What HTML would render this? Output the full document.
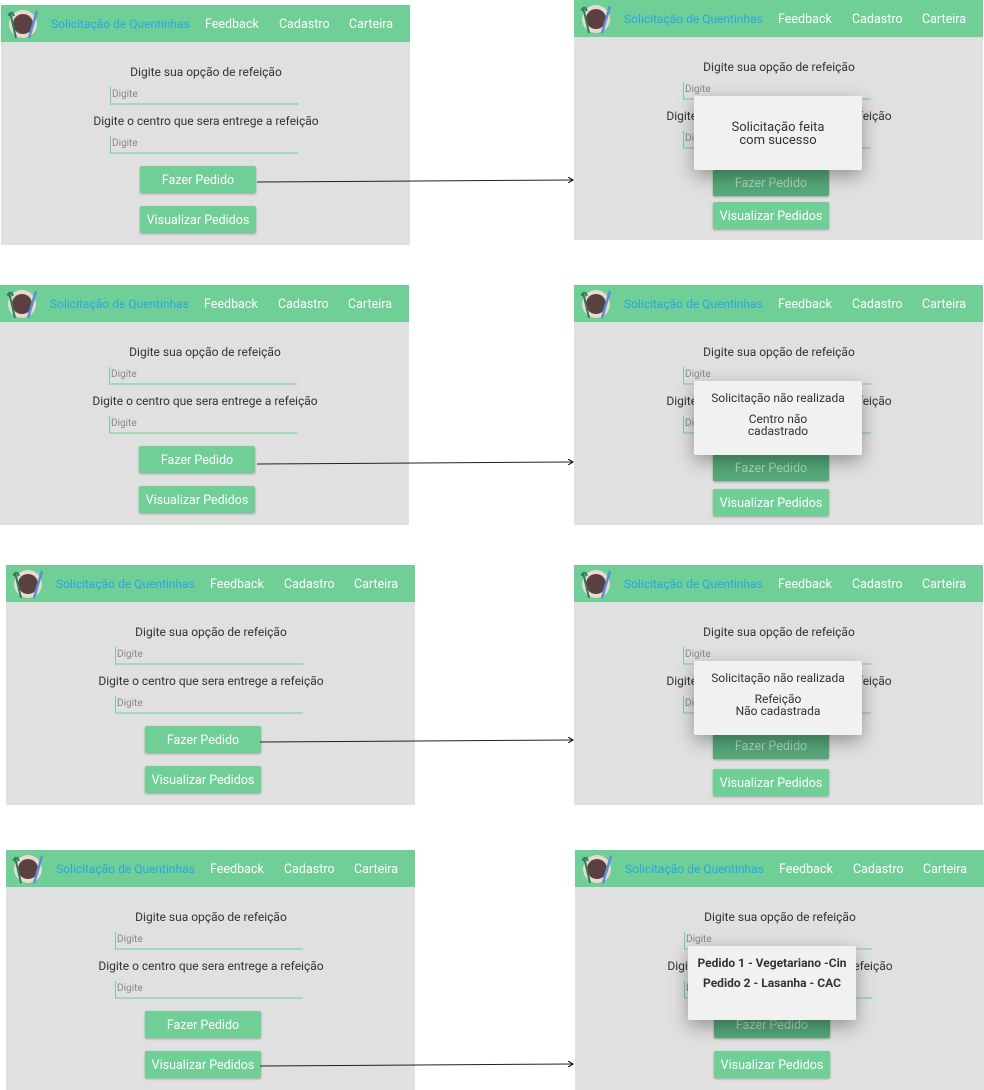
<!DOCTYPE html>
<html><head><meta charset="utf-8"><style>
body{margin:0;width:984px;height:1090px;background:#fff;position:relative;overflow:hidden;font-family:"Roboto","Liberation Sans",sans-serif}
.p{position:absolute;width:409px;height:240px;background:#e0e0e0}
.nav{position:absolute;left:0;top:0;width:100%;height:37px;background:#6fcf97;color:#fff;font-size:12.5px}
.nav span{position:absolute;top:12px}
.nav .t{font-size:12px}
.logo{position:absolute;left:6px;top:3px;width:32px;height:32px}
.t{color:#2aa6e8}
.lab{position:absolute;left:0;width:410px;text-align:center;font-size:12px;color:#333}
.in{position:absolute;left:109px;width:188px;height:18px;border-bottom:2px solid #a5d8b6;font-size:10px;color:#888;border-left:1px solid #6fcfb0;padding-left:1px;box-sizing:border-box;line-height:16px}
.b{position:absolute;left:139px;width:116px;height:27px;background:#6fcf97;color:#fff;font-size:12.5px;text-align:center;line-height:29px;border-radius:2px;box-shadow:0 1px 2px rgba(0,0,0,.3)}
.dk{background:#56a97a;color:#a8d8b8}
.dlg{position:absolute;top:96px;width:168px;height:74px;background:#f1f1f1;border-radius:2px;box-shadow:0 6px 18px rgba(0,0,0,.35);text-align:center;font-size:12px;color:#333}
</style></head><body>

<svg width="984" height="1090" style="position:absolute;left:0;top:0;z-index:5" >
<defs><marker id="a" markerWidth="6" markerHeight="6" refX="5" refY="3" orient="auto"><path d="M0,0L5,3L0,6" fill="none" stroke="#000" stroke-width="1"/></marker></defs>
<line x1="257" y1="182" x2="573" y2="180" stroke="#222" marker-end="url(#a)"/>
<line x1="257" y1="464" x2="573" y2="462" stroke="#222" marker-end="url(#a)"/>
<line x1="260" y1="742" x2="573" y2="740" stroke="#222" marker-end="url(#a)"/>
<line x1="260" y1="1066" x2="573" y2="1064" stroke="#222" marker-end="url(#a)"/>
</svg>

<div class="p" style="left:1px;top:5px">
<div class="nav"><svg class="logo" viewBox="0 0 32 32"><circle cx="16" cy="16" r="14" fill="#e9d9cf"/><circle cx="16" cy="16" r="10" fill="#5a4040"/><path d="M3 4l6 26M1 6l4 3M5 4l2 4" stroke="#2e7d5a" stroke-width="2"/><path d="M30 3L22 30" stroke="#5b8fd6" stroke-width="2.5"/></svg><span class="t" style="left:50px">Solicitação de Quentinhas</span><span style="left:204px">Feedback</span><span style="left:278px">Cadastro</span><span style="left:348px">Carteira</span></div>
<div class="lab" style="top:60px">Digite sua opção de refeição</div>
<div class="in" style="top:82px">Digite</div>
<div class="lab" style="top:109px">Digite o centro que sera entrege a refeição</div>
<div class="in" style="top:131px">Digite</div>
<div class="b" style="top:161px">Fazer Pedido</div>
<div class="b" style="top:201px">Visualizar Pedidos</div>
</div>

<div class="p" style="left:574px;top:0">
<div class="nav"><svg class="logo" viewBox="0 0 32 32"><circle cx="16" cy="16" r="14" fill="#e9d9cf"/><circle cx="16" cy="16" r="10" fill="#5a4040"/><path d="M3 4l6 26M1 6l4 3M5 4l2 4" stroke="#2e7d5a" stroke-width="2"/><path d="M30 3L22 30" stroke="#5b8fd6" stroke-width="2.5"/></svg><span class="t" style="left:50px">Solicitação de Quentinhas</span><span style="left:204px">Feedback</span><span style="left:278px">Cadastro</span><span style="left:348px">Carteira</span></div>
<div class="lab" style="top:60px">Digite sua opção de refeição</div>
<div class="in" style="top:82px">Digite</div>
<div class="lab" style="top:109px">Digite o centro que sera entrege a refeição</div>
<div class="in" style="top:131px">Digite</div>
<div class="b dk" style="top:169px">Fazer Pedido</div>
<div class="b" style="top:202px">Visualizar Pedidos</div>
<div class="dlg" style="left:120px;font-size:13px;line-height:13px"><div style="padding-top:25px">Solicitação feita<br>com sucesso</div></div>
</div>

<div class="p" style="left:0;top:285px">
<div class="nav"><svg class="logo" viewBox="0 0 32 32"><circle cx="16" cy="16" r="14" fill="#e9d9cf"/><circle cx="16" cy="16" r="10" fill="#5a4040"/><path d="M3 4l6 26M1 6l4 3M5 4l2 4" stroke="#2e7d5a" stroke-width="2"/><path d="M30 3L22 30" stroke="#5b8fd6" stroke-width="2.5"/></svg><span class="t" style="left:50px">Solicitação de Quentinhas</span><span style="left:204px">Feedback</span><span style="left:278px">Cadastro</span><span style="left:348px">Carteira</span></div>
<div class="lab" style="top:60px">Digite sua opção de refeição</div>
<div class="in" style="top:82px">Digite</div>
<div class="lab" style="top:109px">Digite o centro que sera entrege a refeição</div>
<div class="in" style="top:131px">Digite</div>
<div class="b" style="top:161px">Fazer Pedido</div>
<div class="b" style="top:201px">Visualizar Pedidos</div>
</div>

<div class="p" style="left:574px;top:285px">
<div class="nav"><svg class="logo" viewBox="0 0 32 32"><circle cx="16" cy="16" r="14" fill="#e9d9cf"/><circle cx="16" cy="16" r="10" fill="#5a4040"/><path d="M3 4l6 26M1 6l4 3M5 4l2 4" stroke="#2e7d5a" stroke-width="2"/><path d="M30 3L22 30" stroke="#5b8fd6" stroke-width="2.5"/></svg><span class="t" style="left:50px">Solicitação de Quentinhas</span><span style="left:204px">Feedback</span><span style="left:278px">Cadastro</span><span style="left:348px">Carteira</span></div>
<div class="lab" style="top:60px">Digite sua opção de refeição</div>
<div class="in" style="top:82px">Digite</div>
<div class="lab" style="top:109px">Digite o centro que sera entrege a refeição</div>
<div class="in" style="top:131px">Digite</div>
<div class="b dk" style="top:169px">Fazer Pedido</div>
<div class="b" style="top:204px">Visualizar Pedidos</div>
<div class="dlg" style="left:120px;line-height:12px"><div style="padding-top:11px">Solicitação não realizada</div><div style="padding-top:9px">Centro não<br>cadastrado</div></div>
</div>

<div class="p" style="left:6px;top:565px">
<div class="nav"><svg class="logo" viewBox="0 0 32 32"><circle cx="16" cy="16" r="14" fill="#e9d9cf"/><circle cx="16" cy="16" r="10" fill="#5a4040"/><path d="M3 4l6 26M1 6l4 3M5 4l2 4" stroke="#2e7d5a" stroke-width="2"/><path d="M30 3L22 30" stroke="#5b8fd6" stroke-width="2.5"/></svg><span class="t" style="left:50px">Solicitação de Quentinhas</span><span style="left:204px">Feedback</span><span style="left:278px">Cadastro</span><span style="left:348px">Carteira</span></div>
<div class="lab" style="top:60px">Digite sua opção de refeição</div>
<div class="in" style="top:82px">Digite</div>
<div class="lab" style="top:109px">Digite o centro que sera entrege a refeição</div>
<div class="in" style="top:131px">Digite</div>
<div class="b" style="top:161px">Fazer Pedido</div>
<div class="b" style="top:201px">Visualizar Pedidos</div>
</div>

<div class="p" style="left:574px;top:565px">
<div class="nav"><svg class="logo" viewBox="0 0 32 32"><circle cx="16" cy="16" r="14" fill="#e9d9cf"/><circle cx="16" cy="16" r="10" fill="#5a4040"/><path d="M3 4l6 26M1 6l4 3M5 4l2 4" stroke="#2e7d5a" stroke-width="2"/><path d="M30 3L22 30" stroke="#5b8fd6" stroke-width="2.5"/></svg><span class="t" style="left:50px">Solicitação de Quentinhas</span><span style="left:204px">Feedback</span><span style="left:278px">Cadastro</span><span style="left:348px">Carteira</span></div>
<div class="lab" style="top:60px">Digite sua opção de refeição</div>
<div class="in" style="top:82px">Digite</div>
<div class="lab" style="top:109px">Digite o centro que sera entrege a refeição</div>
<div class="in" style="top:131px">Digite</div>
<div class="b dk" style="top:167px">Fazer Pedido</div>
<div class="b" style="top:204px">Visualizar Pedidos</div>
<div class="dlg" style="left:120px;line-height:12px"><div style="padding-top:11px">Solicitação não realizada</div><div style="padding-top:9px">Refeição<br>Não cadastrada</div></div>
</div>

<div class="p" style="left:6px;top:850px">
<div class="nav"><svg class="logo" viewBox="0 0 32 32"><circle cx="16" cy="16" r="14" fill="#e9d9cf"/><circle cx="16" cy="16" r="10" fill="#5a4040"/><path d="M3 4l6 26M1 6l4 3M5 4l2 4" stroke="#2e7d5a" stroke-width="2"/><path d="M30 3L22 30" stroke="#5b8fd6" stroke-width="2.5"/></svg><span class="t" style="left:50px">Solicitação de Quentinhas</span><span style="left:204px">Feedback</span><span style="left:278px">Cadastro</span><span style="left:348px">Carteira</span></div>
<div class="lab" style="top:60px">Digite sua opção de refeição</div>
<div class="in" style="top:82px">Digite</div>
<div class="lab" style="top:109px">Digite o centro que sera entrege a refeição</div>
<div class="in" style="top:131px">Digite</div>
<div class="b" style="top:161px">Fazer Pedido</div>
<div class="b" style="top:201px">Visualizar Pedidos</div>
</div>

<div class="p" style="left:575px;top:850px">
<div class="nav"><svg class="logo" viewBox="0 0 32 32"><circle cx="16" cy="16" r="14" fill="#e9d9cf"/><circle cx="16" cy="16" r="10" fill="#5a4040"/><path d="M3 4l6 26M1 6l4 3M5 4l2 4" stroke="#2e7d5a" stroke-width="2"/><path d="M30 3L22 30" stroke="#5b8fd6" stroke-width="2.5"/></svg><span class="t" style="left:50px">Solicitação de Quentinhas</span><span style="left:204px">Feedback</span><span style="left:278px">Cadastro</span><span style="left:348px">Carteira</span></div>
<div class="lab" style="top:60px">Digite sua opção de refeição</div>
<div class="in" style="top:82px">Digite</div>
<div class="lab" style="top:109px">Digite o centro que sera entrege a refeição</div>
<div class="in" style="top:131px">Digite</div>
<div class="b dk" style="top:161px">Fazer Pedido</div>
<div class="b" style="top:201px">Visualizar Pedidos</div>
<div class="dlg" style="left:113px;font-weight:bold;line-height:20px"><div style="padding-top:7px">Pedido 1 - Vegetariano -Cin<br>Pedido 2 - Lasanha - CAC</div></div>
</div>

</body></html>
